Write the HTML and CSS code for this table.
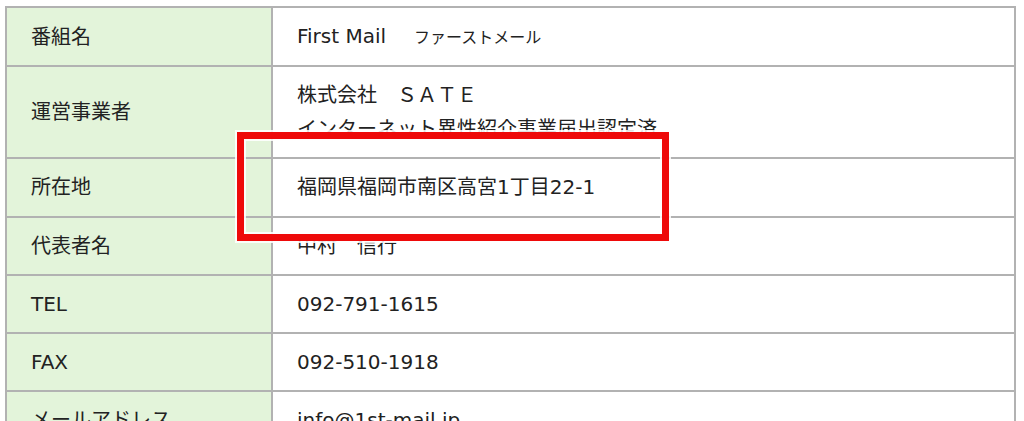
FILE: index.html
```html
<!DOCTYPE html>
<html lang="ja">
<head>
<meta charset="utf-8">
<title>番組概要</title>
<link rel="stylesheet" href="styles.css">
</head>
<body>
<div class="page">
  <table class="info">
    <tbody>
      <tr>
        <td class="label">番組名</td>
        <td class="value">First Mail　<span class="kana">ファーストメール</span></td>
      </tr>
      <tr>
        <td class="label">運営事業者</td>
        <td class="value">株式会社　ＳＡＴＥ<br>インターネット異性紹介事業届出認定済</td>
      </tr>
      <tr>
        <td class="label">所在地</td>
        <td class="value">福岡県福岡市南区高宮1丁目22-1</td>
      </tr>
      <tr>
        <td class="label">代表者名</td>
        <td class="value">中村　信行</td>
      </tr>
      <tr>
        <td class="label">TEL</td>
        <td class="value">092-791-1615</td>
      </tr>
      <tr>
        <td class="label">FAX</td>
        <td class="value">092-510-1918</td>
      </tr>
      <tr>
        <td class="label">メールアドレス</td>
        <td class="value">info@1st-mail.jp</td>
      </tr>
    </tbody>
  </table>
  <div class="highlight" aria-hidden="true"></div>
</div>
</body>
</html>
```
FILE: styles.css
```css
html, body {
  margin: 0;
  padding: 0;
  background: #ffffff;
}

body {
  font-family: "DejaVu Sans", "Noto Sans CJK JP", sans-serif;
  font-size: 20px;
  color: #222222;
}

.page {
  position: relative;
  padding: 6px 8px 0 5px;
}

.info {
  width: 100%;
  border-collapse: separate;
  border-spacing: 0;
  border-top: 2px solid #b2b2b2;
  border-left: 2px solid #b2b2b2;
}

.info td {
  box-sizing: border-box;
  padding: 11px 0 11.25px 24px;
  line-height: 34px;
  border-right: 2px solid #b2b2b2;
  border-bottom: 2px solid #b2b2b2;
  vertical-align: middle;
  text-align: left;
  font-weight: normal;
}

.info tr:first-child td {
  padding-top: 11px;
  padding-bottom: 10px;
}

.info .label {
  width: 266px;
  background: #e3f4da;
}

.info .value {
  background: #ffffff;
}

.kana {
  font-size: 16px;
  margin-left: 8px;
}

.highlight {
  position: absolute;
  left: 237px;
  top: 132px;
  width: 432px;
  height: 109px;
  box-sizing: border-box;
  border: 7px solid #ee0a0a;
  box-shadow: 0 0 0 2px rgba(255, 255, 255, 0.85), inset 0 0 0 2px rgba(255, 255, 255, 0.85);
}
```
